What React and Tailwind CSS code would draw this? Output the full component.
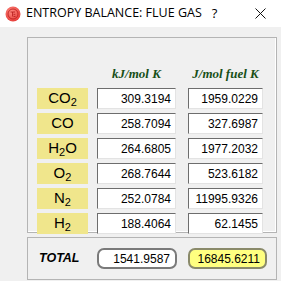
import React from 'react';

const rows = [
  { label: ['CO', '2'], a: '309.3194', b: '1959.0229' },
  { label: ['CO', ''], a: '258.7094', b: '327.6987' },
  { label: ['H', '2', 'O'], a: '264.6805', b: '1977.2032' },
  { label: ['O', '2'], a: '268.7644', b: '523.6182' },
  { label: ['N', '2'], a: '252.0784', b: '11995.9326' },
  { label: ['H', '2'], a: '188.4064', b: '62.1455' },
];

function Formula({ parts }) {
  const [base, sub, tail] = parts;
  return (
    <span>
      {base}
      {sub && <sub className="text-[11px] align-baseline relative top-[3px]">{sub}</sub>}
      {tail}
    </span>
  );
}

function Field({ value }) {
  return (
    <div className="h-[21px] bg-white border border-t-[#6d6d6d] border-l-[#6d6d6d] border-r-[#e3e3e3] border-b-[#e3e3e3] flex items-center justify-end pr-[4px] text-[12px] text-black">
      {value}
    </div>
  );
}

export default function App() {
  return (
    <div className="w-[281px] h-[281px] bg-[#f0f0f0] overflow-hidden" style={{ fontFamily: '"Liberation Sans", sans-serif' }}>
      {/* Title bar */}
      <div className="h-[27px] bg-white flex items-center pl-[5px]">
        <svg width="16" height="16" viewBox="0 0 16 16">
          <defs>
            <radialGradient id="g" cx="0.4" cy="0.35" r="0.7">
              <stop offset="0" stopColor="#ff8a80" />
              <stop offset="1" stopColor="#e53935" />
            </radialGradient>
          </defs>
          <circle cx="8" cy="8" r="7.5" fill="url(#g)" />
          <circle cx="8" cy="8" r="5" fill="none" stroke="#b71c1c" strokeWidth="0.8" />
          <path d="M5.5 6 H10 M7.6 6 V10.5 M8.5 8.3 H10.3 M8.5 10.4 H10.5" stroke="#b71c1c" strokeWidth="0.9" fill="none" />
        </svg>
        <span className="ml-[5px] text-[12.5px] text-black" style={{ fontFamily: '"Open Sans", sans-serif' }}>ENTROPY BALANCE: FLUE GAS</span>
        <span className="ml-[10px] text-[13px] text-black" style={{ fontFamily: '"Open Sans", sans-serif' }}>?</span>
        <svg className="ml-[38px]" width="11" height="11" viewBox="0 0 11 11">
          <path d="M0.5 0.5 L10.5 10.5 M10.5 0.5 L0.5 10.5" stroke="#111" strokeWidth="1" />
        </svg>
      </div>

      {/* Main group */}
      <div className="ml-[27px] mt-[10px] w-[250px] h-[196px] border border-[#b4b4b4] shadow-[inset_-1px_-1px_0_#fff] pl-[9px] pt-[26px]">
        <div className="grid grid-cols-[51px_79px_78px] gap-x-[9px] mb-[10px] h-[14px] items-center">
          <div />
          <div className="text-center text-[13px] font-bold italic text-[#174f17]" style={{ fontFamily: '"Liberation Serif", serif' }}>kJ/mol K</div>
          <div className="text-center text-[13px] font-bold italic text-[#174f17] ml-[3px]" style={{ fontFamily: '"Liberation Serif", serif' }}>J/mol fuel K</div>
        </div>
        <div className="flex flex-col gap-[4px]">
          {rows.map((r, i) => (
            <div key={i} className="grid grid-cols-[51px_79px_78px] gap-x-[9px] items-center">
              <div className="h-[21px] bg-[#f0e68c] flex items-center justify-center text-[15px] text-black">
                <Formula parts={r.label} />
              </div>
              <Field value={r.a} />
              <div className="ml-[3px]">
                <Field value={r.b} />
              </div>
            </div>
          ))}
        </div>
      </div>

      {/* Total group */}
      <div className="ml-[27px] mt-[4px] w-[250px] h-[43px] border border-[#b4b4b4] flex items-center pl-[11px]">
        <span className="w-[58px] text-[12.5px] font-bold italic text-black">TOTAL</span>
        <div className="w-[80px] h-[21px] rounded-[7px] border-2 border-[#7a7a7a] bg-white flex items-center justify-end pr-[5px] text-[12px]">1541.9587</div>
        <div className="ml-[11px] w-[79px] h-[21px] rounded-[7px] border-2 border-[#8a8a6a] bg-[#ffff80] flex items-center justify-end pr-[5px] text-[12px]">16845.6211</div>
      </div>
    </div>
  );
}
